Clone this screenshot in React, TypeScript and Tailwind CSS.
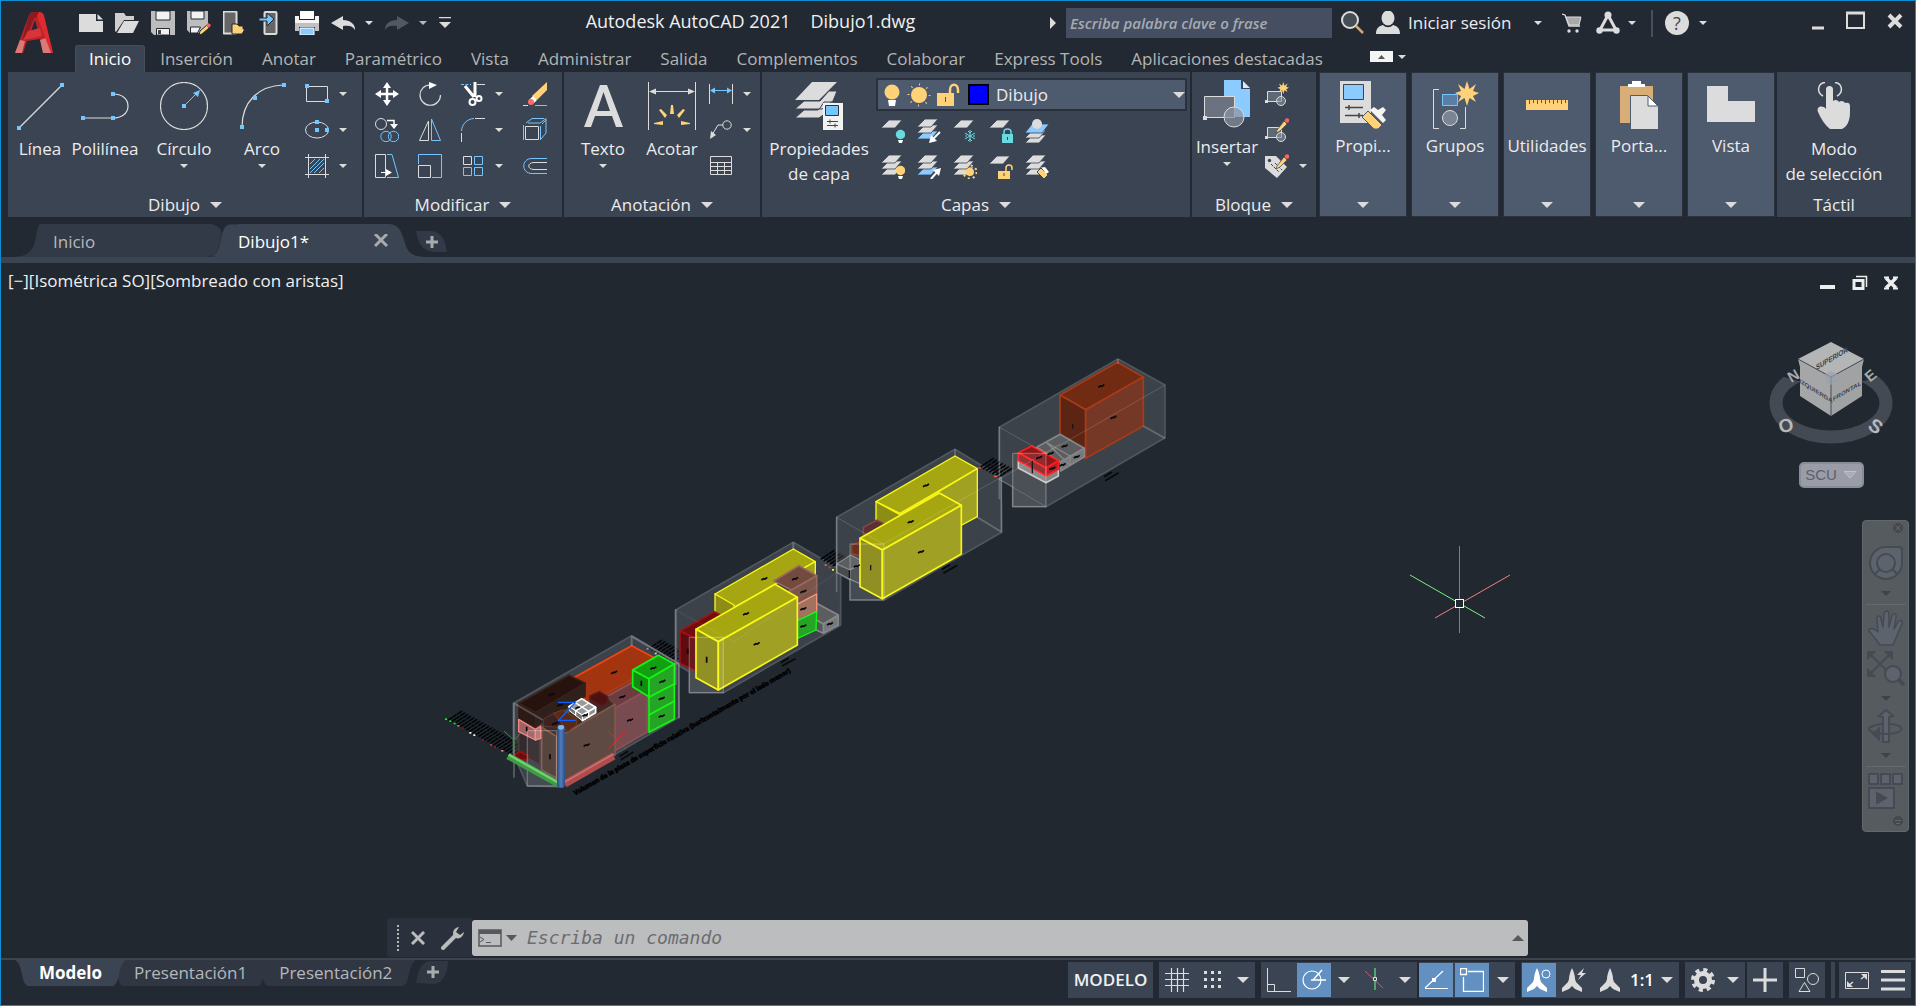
import type { ReactNode } from "react"

// --- Types ---
type Kids = { children?: ReactNode }
type Face = [points: string, fill: string, stroke?: string, width?: number]

// --- Colors used by the icons ---
const W = "#dcdcdc"
const B = "#75c5ff"
const Y = "#ffd27a"
const P = "#3b4453"

// --- Small helpers ---
function Svg({ w = 24, h = 24, children }: Kids & { w?: number; h?: number }) {
  return (
    <svg width={w} height={h} viewBox={`0 0 ${w} ${h}`} fill="none" stroke={W} className="shrink-0" aria-hidden="true">
      {children}
    </svg>
  )
}

function Caret({ big }: { big?: boolean }) {
  return big ? (
    <Svg w={12} h={6}><path d="M0 0h12L6 6z" fill={W} stroke="none" /></Svg>
  ) : (
    <Svg w={8} h={4}><path d="M0 0h8L4 4z" fill={W} stroke="none" /></Svg>
  )
}

// --- Quick access toolbar icons ---
const quickIcons: { name: string; icon: ReactNode }[] = [
  { name: "Nuevo", icon: <Svg><path d="M0 3h17v7h7v11H0z" fill={W} stroke="none" /><path d="M18.500 3v5.500H24z" fill={W} stroke="none" /></Svg> },
  { name: "Abrir", icon: <Svg><path d="M0 20V2h9l2 3h8v4H9L1 21z" fill="#cfcfcf" stroke="none" /><path d="M9 10h15l-6 12H2z" fill={W} stroke="none" /></Svg> },
  { name: "Guardar", icon: <Svg><path d="M0 0h24v24H3l-3-3z" fill="#bdbdbd" stroke="none" /><path d="M5 0h14v9H5z" fill="#f2f2f2" stroke="#222933" /><path d="M5.500 17.500h13V24h-13z" fill="#f2f2f2" stroke="#222933" /><path d="M7 19h3v4H7z" fill="#444" stroke="none" /></Svg> },
  { name: "Guardar como", icon: <Svg><path d="M0 0h21v13l-9 9H3l-3-3z" fill="#bdbdbd" stroke="none" /><path d="M4 0h13v8H4z" fill="#f2f2f2" stroke="#222933" /><path d="M3.500 16h10l-3 6h-7z" fill="#f2f2f2" stroke="#222933" /><path d="M13 20l7-6 2 3-7 6-3 1z" fill={Y} stroke="#222933" /><path d="M19 14l2-2 3 2-2 3z" fill="#ff6060" stroke="none" /></Svg> },
  { name: "Abrir desde móvil", icon: <Svg><rect x="0.500" y="0.500" width="13" height="22" rx="1" fill="#666" stroke={W} strokeWidth="2" /><path d="M9 13h5l2 2h4v3h2l-3 5H9z" fill={Y} stroke="#222933" /></Svg> },
  { name: "Guardar en móvil", icon: <Svg><rect x="5.500" y="1" width="12" height="22" rx="1" fill="#666" stroke={W} strokeWidth="2" /><path d="M0 7h8V2l7 6-7 7v-5H0z" fill={B} stroke="#222933" /></Svg> },
  { name: "Trazar", icon: <Svg><path d="M5 0h14v8H5z" fill="#fff" stroke="none" /><path d="M0 5h4v4h16V5h4v7H0z" fill="#f4f4f4" stroke="none" /><path d="M0 12h24v8h-4v-4H4v4H0z" fill="#c0c0c0" stroke="none" /><path d="M5 17h14v7H5z" fill="#8ccbff" stroke="#fff" /></Svg> },
]

const Arrow = ({ dim, flip }: { dim?: boolean; flip?: boolean }) => (
  <Svg>
    <path d="M0 12L12 5v4c7 0 12 4 12 9v1c-2-4-6-5-12-4v4z" transform={flip ? "translate(24 0) scale(-1 1)" : undefined} fill={dim ? "#5f646b" : W} stroke="none" />
  </Svg>
)

// --- Big ribbon icons ---
const dot = (x: number, y: number) => <rect x={x - 2} y={y - 2} width="4" height="4" fill={B} stroke="none" />

const LineIcon = <Svg w={48} h={48}><path d="M3 46L46 3" strokeWidth="1.200" />{dot(3, 46)}{dot(46, 3)}</Svg>
const PolyIcon = <Svg w={48} h={48}><path d="M1 36h31M32 36c8 0 15-4 15-12s-7-12-15-12" strokeWidth="1.200" />{dot(2, 36)}{dot(32, 36)}{dot(32, 12)}</Svg>
const CircleIcon = <Svg w={48} h={48}><circle cx="24" cy="24" r="23.500" strokeWidth="1.200" /><path d="M26 22l10-10" stroke={B} /><path d="M40 8l-2 7-5-4z" fill={B} stroke="none" />{dot(24, 24)}</Svg>
const ArcIcon = <Svg w={48} h={48}><path d="M4 45C4 20 20 4 45 3" strokeWidth="1.200" />{dot(4, 45)}{dot(17, 16)}{dot(46, 3)}</Svg>
const TextIcon = <Svg w={48} h={48}><path d="M5 45L21 3h7l16 42h-7l-4-11H16l-4 11zM18 29h13L24.500 10z" fill={W} stroke="none" /></Svg>
const DimIcon = (
  <Svg w={48} h={48}>
    <path d="M.5 0v48M47.500 0v48M2 9.500h44" />
    <path d="M1 9.500l7-3v6zM47 9.500l-7-3v6z" fill={W} stroke="none" />
    <path d="M22 32l1-9h2l1 9zM17 36l-6-8 2-1 6 6zM31 36l6-8-2-1-6 6zM15 43l-9-1v-1l9-2zM33 43l9-1v-1l-9-2z" fill={Y} stroke="none" />
  </Svg>
)
const LayerPropIcon = (
  <Svg w={48} h={48}>
    <path d="M17 0h25L24 18H0z" fill={W} stroke="none" />
    <path d="M9 19h16l9-10h8l-4 10-11 8H0zM9 28h14l2-2 4-6h9v6L24 36H0z" fill={W} stroke={P} strokeWidth="1" />
    <path d="M28 21h20v27H28z" fill="#f2f2f2" stroke="none" />
    <path d="M30.500 23.500h13v10h-13z" fill={B} stroke="#333" />
    <path d="M32 39.500h11M32 43.500h11M35 37.500v4M40 41.500v4" stroke="#444" />
  </Svg>
)
const InsertIcon = (
  <Svg w={48} h={48}>
    <path d="M21 0h17v9h9v28H21z" fill="#8ccbff" stroke="none" /><path d="M40 1v7h7z" fill="#d5ecff" stroke="none" />
    <path d="M1.500 16.500h30v21h-30z" fill="#6b7381" /><circle cx="31" cy="37" r="10" fill="#8a92a0" fillOpacity=".7" />
    <path d="M0 36h4v4H0z" fill={W} stroke="none" />
  </Svg>
)
const PropsIcon = (
  <Svg w={48} h={48}>
    <path d="M1 0h31v42H1z" fill={W} stroke="none" /><path d="M4.500 3.500h20v15h-20z" fill="#8ccbff" stroke="#444" />
    <path d="M6 26.500h18M6 34.500h18M10 24v5M20 32v5" stroke="#444" strokeWidth="1.500" />
    <path d="M23 36l6-6 14 14-4 4h-4z" fill={Y} stroke="#4e5a6d" /><path d="M31 29l4-3 4 3 5-3 3 3-4 5 4 5-3 3z" fill="#f4f4f4" stroke="none" />
  </Svg>
)
const starPoints = "36,0 38.500,8 45,3 42,10 48,12 42,15 45,21 38.500,17 36,25 33.500,17 27,21 30,15 24,12 30,10 27,3 33.500,8"
const GroupsIcon = (
  <Svg w={48} h={48}>
    <path d="M8 8.500H2.500v39H8M29 47.500h5.500V26" /><path d="M11.500 13.500h15v11h-15z" fill="#5a7ea6" stroke={B} />
    <circle cx="19" cy="37" r="7.500" fill="#7b8492" /><polygon points={starPoints} fill={Y} stroke="none" />
  </Svg>
)
const RulerIcon = (
  <Svg w={48} h={48}>
    <path d="M3 19h42v10H3z" fill={Y} stroke="none" />
    <path d="M6.500 19v4M10.500 19v3M14.500 19v4M18.500 19v3M22.500 19v4M26.500 19v3M30.500 19v4M34.500 19v3M38.500 19v4M42.500 19v3" stroke="#4e5a6d" />
  </Svg>
)
const ClipIcon = (
  <Svg w={48} h={48}>
    <path d="M5 5h33v37H5z" fill="#d8ad76" stroke="none" /><path d="M13 6V3h4V0h9v3h4v3z" fill="#fff" stroke="none" />
    <path d="M15.500 14.500h17l11 11v23h-28z" fill={W} stroke="#4e5a6d" /><path d="M33 15v10h10z" fill="#fff" stroke="#4e5a6d" />
  </Svg>
)
const ViewIcon = <Svg w={48} h={48}><path d="M0 5h21v15h27v21H0z" fill={W} stroke="none" /></Svg>
const TouchIcon = (
  <Svg w={48} h={48}>
    <path d="M13 14C6 10 8 1 15 .5M27 14c7-4 5-13-2-13.500" strokeWidth="1.500" />
    <path d="M16 27V7c0-4 7-4 7 0v12c2-2 5-1 6 1 2-2 5-1 6 1 3-1 5 0 5 3v6c0 9-3 15-8 17H20C15 43 11 37 8 30c-2-6 5-7 8-3z" fill={W} stroke="none" />
  </Svg>
)

// --- Small ribbon icons ---
const RectIcon = <Svg><path d="M1.500 4.500h21v15h-21z" />{dot(2, 4)}{dot(22, 19)}</Svg>
const EllipseIcon = <Svg><ellipse cx="12" cy="12" rx="11.500" ry="8" />{dot(12, 12)}{dot(12, 4)}{dot(22, 12)}</Svg>
const HatchIcon = <Svg><path d="M3.500 0v24M20.500 0v24M0 3.500h24M0 20.500h24" /><path d="M5 10l5-5M5 15L15 5M5 19L19 5M9 19l10-10M14 19l5-5" stroke={B} /></Svg>
const MoveIcon = <Svg><path d="M12 3v18M3 12h18" strokeWidth="2.500" stroke="#fff" /><path d="M12 0l4 6H8zM12 24l4-6H8zM0 12l6-4v8zM24 12l-6-4v8z" fill="#fff" stroke="none" /></Svg>
const RotateIcon = <Svg><path d="M12 3C6 3 2 8 2 13a10.200 10.200 0 0 0 20.500 0" strokeWidth="1.200" /><path d="M11 0l8 3-8 4z" fill="#fff" stroke="none" /></Svg>
const TrimIcon = (
  <Svg>
    <path d="M0 2.500h10" stroke={B} strokeDasharray="3 1.500" /><path d="M16 2.500h8" />
    <path d="M4 4l9 11M14 0v15" stroke="#fff" strokeWidth="3" /><circle cx="11.500" cy="20" r="3" strokeWidth="2" stroke="#fff" /><circle cx="18" cy="16.500" r="2.500" strokeWidth="2" stroke="#fff" />
  </Svg>
)
const EraseIcon = <Svg><path d="M0 23.500h5" /><path d="M12 23.500h12" stroke={B} /><path d="M24 0v8L14 18l-5-4z" fill={Y} stroke="none" /><path d="M10 14l4 4-3 3-5-3z" fill="#fff" stroke="none" /><circle cx="8" cy="20" r="3" fill="#ff6b6b" stroke="none" /></Svg>
const CopyIcon = <Svg><circle cx="6" cy="6" r="5.500" /><path d="M12 2.500h7v4" stroke="#fff" strokeWidth="1.500" /><path d="M15 6h8l-4 5z" fill="#fff" stroke="none" /><circle cx="11" cy="18.500" r="5.200" stroke={B} /><circle cx="18.500" cy="18.500" r="5.200" stroke={B} /></Svg>
const MirrorIcon = <Svg><path d="M10.500 3v19.500h-9z" /><path d="M13.500 1v21.500h9z" stroke={B} /></Svg>
const FilletIcon = <Svg><path d="M14 .5h10M.5 15v9" /><path d="M.5 13C1 6 6 1 13 .5" stroke={B} /></Svg>
const ExplodeIcon = <Svg><path d="M.5 7v15M3 5l6-4.500h12M5 5h12l6-4.500V15l-5 6M19 6l4-4" stroke={B} /><path d="M2.500 8.500h13v13h-13z" /><path d="M17.500 8v14" stroke={B} /></Svg>
const StretchIcon = <Svg><path d="M.5.5h10v23H.5z" /><path d="M12 .5h5l6.500 23H12" stroke={B} /><path d="M6 18.500h6" stroke="#fff" /><path d="M11 15l6 3.500-6 3.500z" fill="#fff" stroke="none" /></Svg>
const ScaleIcon = <Svg><path d="M.5 10V.5h23v23H14" stroke={B} /><path d="M.5 11.500h12v12H.5z" /></Svg>
const ArrayIcon = <Svg><path d="M2.500 2.500h8v8h-8z" /><path d="M13.500 2.500h8v8h-8zM2.500 13.500h8v8h-8zM13.500 13.500h8v8h-8z" stroke={B} /></Svg>
const OffsetIcon = <Svg><path d="M24 4.500H9C-2 4.500-2 19.500 9 19.500h15" stroke={B} /><path d="M24 8.500H11c-7 0-7 7 0 7h13" /></Svg>
const LinearIcon = <Svg><path d="M.5 2v20M23.500 2v20" /><path d="M3 8.500h18" stroke={B} /><path d="M1 8.500l5-3v6zM23 8.500l-5-3v6z" fill={B} stroke="none" /></Svg>
const LeaderIcon = <Svg><circle cx="18" cy="7" r="4.200" /><path d="M14 7H9L3 17" /><path d="M1 21l1-8 5 4z" fill={W} stroke="none" /></Svg>
const TableIcon = <Svg><path d="M1.500 2.500h21v18h-21zM1 8.500h22M1 12.500h22M1 16.500h22M8.500 8v13M15.500 8v13" /></Svg>

const sheet = (y: number, fill = W) => <path d={`M8 ${y}h13l-7 8H0z`} fill={fill} stroke={P} strokeWidth=".8" />
const Sheets = ({ mark, low = W }: { mark: ReactNode; low?: string }) => <Svg>{sheet(12, low)}{sheet(6)}{sheet(0)}{mark}</Svg>
const bulb = (c: string) => <><circle cx="19.500" cy="15.500" r="4.700" fill={c} stroke="none" /><path d="M17 21h5l-1 3h-3z" fill="#fff" stroke="none" /></>
const lock = (c: string, open?: boolean) => <><path d={open ? "M9 16h12v8H9z" : "M13 15h11v9H13z"} fill={c} stroke="none" /><path d={open ? "M17 16v-3c0-4 6-4 6 0v2" : "M15 15v-2c0-4 7-4 7 0v2"} stroke={c} strokeWidth="1.500" /><path d={open ? "M15 18v3" : "M18.500 18v3"} stroke={P} /></>
const layerIcons: ReactNode[] = [
  <Svg>{sheet(1)}{bulb("#6bdae0")}</Svg>,
  <Sheets low="#8ccbff" mark={<><path d="M23 13l-7 7" stroke="#fff" strokeWidth="2" /><path d="M12 24l2-8 6 6z" fill="#fff" stroke="none" /></>} />,
  <Svg>{sheet(1)}<path d="M17 11v12M12 14l10 6M22 14l-10 6M15 12l2 2 2-2M15 22l2-2 2 2M12 17h2M20 17h2" stroke="#6bdae0" /></Svg>,
  <Svg>{sheet(1)}{lock("#6bdae0")}</Svg>,
  <Svg>{sheet(16)}{sheet(11)}<path d="M7 5h17l-7 9H0z" fill="#8ccbff" stroke={P} strokeWidth=".8" /><circle cx="12" cy="5" r="5" fill={W} stroke="none" /></Svg>,
  <Sheets mark={bulb(Y)} />,
  <Sheets low="#8ccbff" mark={<><path d="M14 24l6-7" stroke="#fff" strokeWidth="2" /><path d="M24 13l-2 8-6-6z" fill="#fff" stroke="none" /></>} />,
  <Sheets mark={<><circle cx="17" cy="17" r="4" fill={Y} stroke="none" /><circle cx="17" cy="17" r="6.500" stroke={Y} strokeWidth="2" strokeDasharray="2 3.100" /></>} />,
  <Svg>{sheet(1)}{lock(Y, true)}</Svg>,
  <Sheets mark={<><path d="M12 17l4-4 7 7-4 4z" fill={Y} stroke={P} /><path d="M17 13l3-1 4 5-3 2z" fill="#fff" stroke="none" /></>} />,
]

const block = <><path d="M2.500 9.500h14v10h-14z" fill="#5f6875" /><circle cx="16" cy="19" r="4.500" fill="#8a92a0" fillOpacity=".6" /><path d="M0 18h3v3H0z" fill={W} stroke="none" /></>
const pencil = <><path d="M12 12l7-9 3 3-7 7-4 2z" fill={Y} stroke={P} strokeWidth=".7" /><circle cx="22" cy="2.500" r="2.300" fill="#ff6060" stroke="none" /></>
const BlockNewIcon = <Svg>{block}<polygon points={starPoints} transform="translate(1 0) scale(.48)" fill={Y} stroke="none" /></Svg>
const BlockEditIcon = <Svg>{block}{pencil}</Svg>
const TagIcon = <Svg><path d="M0 2h11l11 11-10 11L0 14z" fill={W} stroke="none" /><circle cx="4.500" cy="6.500" r="1.700" fill={P} stroke="none" /><path d="M6 10l8 8M10 9l7 7" stroke={P} strokeDasharray="3 1" />{pencil}</Svg>

// --- Ribbon parts ---
function BigButton({ icon, label, caret, className }: { icon: ReactNode; label: string; caret?: boolean; className: string }) {
  return (
    <button type="button" className={`flex shrink-0 flex-col items-center ${className}`}>
      {icon}
      <span className="mt-[6px] block text-[17px] leading-[25px] whitespace-pre-line text-[#ececec]">{label}</span>
      {caret && <span className="mt-[3px]"><Caret /></span>}
    </button>
  )
}

function SmallButton({ icon, label, caret }: { icon: ReactNode; label: string; caret?: boolean }) {
  return (
    <button type="button" aria-label={label} className="flex h-6 items-center gap-[10px]">
      {icon}
      {caret && <Caret />}
    </button>
  )
}

function Panel({ title, className, noCaret, children }: Kids & { title: string; className: string; noCaret?: boolean }) {
  return (
    <section className={`flex h-[145px] flex-col bg-[#3b4453] ${className}`}>
      <div className="flex h-[121px] pt-[10px]">{children}</div>
      <button type="button" className="flex h-6 items-center justify-center gap-[10px] text-[17px] leading-6 text-[#ececec]">
        {title}
        {!noCaret && <Caret big />}
      </button>
    </section>
  )
}

const menuTabs = ["Inicio", "Inserción", "Anotar", "Paramétrico", "Vista", "Administrar", "Salida", "Complementos", "Colaborar", "Express Tools", "Aplicaciones destacadas"]

const foldedPanels = [
  { label: "Propi...", icon: PropsIcon },
  { label: "Grupos", icon: GroupsIcon },
  { label: "Utilidades", icon: RulerIcon },
  { label: "Porta...", icon: ClipIcon },
  { label: "Vista", icon: ViewIcon },
]

function Header() {
  return (
    <header className="flex h-[71px] items-start">
      <button type="button" aria-label="Menú de la aplicación" className="w-[74px] pt-[11px] pl-[14px]">
        <svg width="40" height="42" viewBox="0 0 40 42">
          <path d="M0 41L14 3q1-3 6-3h4q4 0 5 4l9 37h-9l-4-14-13 2-4 12z" fill="#b9242a" />
          <path d="M14 3q1-3 6-3h4l1 5-6 1-6 16-6 7z" fill="#8d1a20" />
          <path d="M20 8l3 11-8 3z" fill="#222933" />
          <path d="M13 19l12-3 2 8-19 4z" fill="#d8343a" />
          <path d="M0 41l5-13 5 1-3 12zM28 41l-3-13 6-2 6 15z" fill="#d97a76" />
          <path d="M24 0q4 0 5 4l9 37h-2L22 4z" fill="#dd2b30" />
        </svg>
      </button>
      <div className="flex min-w-0 flex-1 flex-col">
        <div className="flex h-11 items-center">
          <div className="flex shrink-0 items-center gap-3 pl-1">
            {quickIcons.map((q) => (
              <button key={q.name} type="button" aria-label={q.name}>{q.icon}</button>
            ))}
            <button type="button" aria-label="Deshacer" className="flex items-center gap-[10px]"><Arrow /><Caret /></button>
            <button type="button" aria-label="Rehacer" className="flex items-center gap-[10px] opacity-80"><Arrow dim flip /><Caret /></button>
            <button type="button" aria-label="Personalizar">
              <Svg w={12} h={12}><path d="M0 .5h12" stroke={W} strokeWidth="1.500" /><path d="M0 5h12l-6 6z" fill={W} stroke="none" /></Svg>
            </button>
          </div>
          <h1 className="flex min-w-0 flex-1 justify-center gap-[20px] pb-1 text-[18px] whitespace-nowrap text-[#f0f0f0]">
            <span>Autodesk AutoCAD 2021</span><span>Dibujo1.dwg</span>
          </h1>
          <div className="flex shrink-0 items-center">
            <Svg w={6} h={12}><path d="M0 0l6 6-6 6z" fill={W} stroke="none" /></Svg>
            <input aria-label="Buscar" placeholder="Escriba palabra clave o frase" className="ml-[10px] h-[30px] w-[266px] bg-[#464f61] px-1 text-[15px] font-semibold text-white italic placeholder:text-[#a5aab3]" />
            <button type="button" aria-label="Búsqueda" className="ml-2">
              <Svg><circle cx="10" cy="9" r="8" fill="#474d55" strokeWidth="2" /><path d="M16 15l7 7" stroke="#d8a56e" strokeWidth="2.500" /></Svg>
            </button>
            <button type="button" className="ml-3 flex items-center gap-2 text-[17px] text-[#ececec]">
              <Svg><ellipse cx="12" cy="7" rx="6.500" ry="7.500" fill={W} stroke="none" /><path d="M0 23c0-6 3-8 7-9 3 3 7 3 10 0 4 1 7 3 7 9z" fill={W} stroke="none" /></Svg>
              <span className="w-[118px] text-left">Iniciar sesión</span>
              <Caret />
            </button>
            <button type="button" aria-label="Tienda" className="ml-5">
              <Svg w={20} h={20}><path d="M0 1l3 1 4 11h11" strokeWidth="1.300" /><path d="M4 4h15l-2 8H7z" fill="#a9a9a9" stroke={W} /><circle cx="7" cy="18" r="1.700" fill={W} stroke="none" /><circle cx="15" cy="18" r="1.700" fill={W} stroke="none" /></Svg>
            </button>
            <button type="button" aria-label="Autodesk App Store" className="ml-[14px] flex items-center gap-2">
              <Svg><path d="M12 4L4 19h16z" strokeWidth="3" /><circle cx="12" cy="4" r="3.500" fill={W} stroke="none" /><circle cx="3.500" cy="19.500" r="3.200" fill={W} stroke="none" /><circle cx="20.500" cy="19.500" r="3.200" fill={W} stroke="none" /></Svg>
              <Caret />
            </button>
            <span className="ml-[15px] h-[27px] w-[2px] bg-[#464f61]" />
            <button type="button" aria-label="Ayuda" className="ml-3 flex items-center gap-[10px]">
              <span className="flex size-6 items-center justify-center rounded-full bg-[#dcdcdc] text-[18px] leading-6 text-[#444]">?</span>
              <Caret />
            </button>
          </div>
          <div className="flex h-9 w-[208px] shrink-0 items-center justify-end gap-[22px] pb-1 pr-3">
            <button type="button" aria-label="Minimizar"><Svg w={12} h={20}><path d="M0 17h12" strokeWidth="3" /></Svg></button>
            <button type="button" aria-label="Maximizar"><Svg w={19} h={20}><path d="M1 2v15h17V2z" strokeWidth="2" /><path d="M0 2h19" strokeWidth="3" /></Svg></button>
            <button type="button" aria-label="Cerrar"><Svg w={16} h={20}><path d="M2 4l12 12M14 4L2 16" strokeWidth="4" /></Svg></button>
          </div>
        </div>
        <nav className="flex h-[27px] items-stretch gap-px text-[17px] leading-[26px] whitespace-nowrap text-[#b4b5b3]">
          {menuTabs.map((t, i) => (
            <button
              key={t}
              type="button"
              className={i === 0 ? "rounded-t-[3px] border border-b-0 border-[#454e5d] bg-[#3b4453] px-[13px] text-white" : "px-[14px]"}
            >
              {t}
            </button>
          ))}
          <button type="button" aria-label="Minimizar la cinta" className="ml-8 flex items-center gap-[5px] pb-1">
            <Svg w={23} h={11}><path d="M0 0h23v11H0z" fill="#f4f4f4" stroke="none" /><path d="M8 8h7l-3.500-4z" fill="#555" stroke="none" /></Svg>
            <Caret />
          </button>
        </nav>
      </div>
    </header>
  )
}

function Ribbon() {
  return (
    <div className="flex gap-[2px] pr-1 pl-[7px]">
      <Panel title="Dibujo" className="w-[354px]">
        <BigButton icon={LineIcon} label="Línea" className="w-[64px]" />
        <BigButton icon={PolyIcon} label="Polilínea" className="w-[66px]" />
        <BigButton icon={CircleIcon} label="Círculo" caret className="w-[92px]" />
        <BigButton icon={ArcIcon} label="Arco" caret className="w-[64px]" />
        <div className="ml-[11px] flex flex-col gap-3">
          <SmallButton icon={RectIcon} label="Rectángulo" caret />
          <SmallButton icon={EllipseIcon} label="Elipse" caret />
          <SmallButton icon={HatchIcon} label="Sombreado" caret />
        </div>
      </Panel>
      <Panel title="Modificar" className="w-[198px]">
        <div className="grid h-24 grid-cols-[43px_43px_62px_24px] gap-y-3 pl-[11px]">
          <SmallButton icon={MoveIcon} label="Desplazar" />
          <SmallButton icon={RotateIcon} label="Girar" />
          <SmallButton icon={TrimIcon} label="Recortar" caret />
          <SmallButton icon={EraseIcon} label="Borrar" />
          <SmallButton icon={CopyIcon} label="Copiar" />
          <SmallButton icon={MirrorIcon} label="Simetría" />
          <SmallButton icon={FilletIcon} label="Empalme" caret />
          <SmallButton icon={ExplodeIcon} label="Descomponer" />
          <SmallButton icon={StretchIcon} label="Estirar" />
          <SmallButton icon={ScaleIcon} label="Escala" />
          <SmallButton icon={ArrayIcon} label="Matriz" caret />
          <SmallButton icon={OffsetIcon} label="Desfase" />
        </div>
      </Panel>
      <Panel title="Anotación" className="w-[196px]">
        <BigButton icon={TextIcon} label="Texto" caret className="w-[78px]" />
        <BigButton icon={DimIcon} label="Acotar" className="w-[60px]" />
        <div className="ml-[7px] flex flex-col gap-3">
          <SmallButton icon={LinearIcon} label="Lineal" caret />
          <SmallButton icon={LeaderIcon} label="Directriz" caret />
          <SmallButton icon={TableIcon} label="Tabla" />
        </div>
      </Panel>
      <Panel title="Capas" className="w-[428px]">
        <BigButton icon={LayerPropIcon} label={"Propiedades\nde capa"} className="w-[114px]" />
        <div className="-mt-1 flex flex-col">
          <div className="flex h-[33px] w-[311px] items-center border-2 border-[#2a313d] bg-[#4e5a6d] pl-[6px]">
            <Svg w={16} h={24}><circle cx="8" cy="9" r="7.500" fill={Y} stroke="none" /><path d="M4 17h8l-1 6H5z" fill="#fff" stroke="none" /></Svg>
            <span className="ml-[7px]"><Svg><circle cx="12" cy="12" r="8" fill={Y} stroke="none" /><circle cx="12" cy="12" r="10.500" stroke={Y} strokeWidth="2" strokeDasharray="1 7.200" /></Svg></span>
            <span className="ml-[6px]"><Svg><path d="M0 10h17v13H0z" fill={Y} stroke="none" /><path d="M13 10V7c0-7 8-7 8 0v3" stroke={Y} strokeWidth="2.500" /><path d="M8.500 14v5" stroke="#555" /></Svg></span>
            <span className="ml-[7px] size-[21px] border-2 border-black bg-[#0000ff]" />
            <select aria-label="Capa actual" className="ml-[7px] min-w-0 flex-1 appearance-none bg-transparent text-[17px] leading-[26px] text-[#ececec]">
              <option>Dibujo</option>
            </select>
            <Caret big />
          </div>
          <div className="mt-[8px] ml-[5px] grid grid-cols-[36px_36px_36px_36px_36px] gap-y-3">
            {layerIcons.map((icon, i) => (
              <button key={i} type="button" aria-label={`Herramienta de capa ${i + 1}`} className="h-6">{icon}</button>
            ))}
          </div>
        </div>
      </Panel>
      <Panel title="Bloque" className="w-[124px]">
        <BigButton icon={InsertIcon} label="Insertar" caret className="-mt-[2px] w-[70px]" />
        <div className="ml-[3px] flex flex-col gap-3">
          <SmallButton icon={BlockNewIcon} label="Crear bloque" />
          <SmallButton icon={BlockEditIcon} label="Editar bloque" />
          <SmallButton icon={TagIcon} label="Editar atributos" caret />
        </div>
      </Panel>
      <div className="ml-px flex gap-1">
        {foldedPanels.map((p) => (
          <button key={p.label} type="button" className="flex h-[145px] w-[88px] flex-col items-center border border-[#2b323e] bg-[#4e5a6d] pt-2 text-[17px] leading-[25px] text-[#ececec]">
            {p.icon}
            <span className="mt-1 flex-1">{p.label}</span>
            <span className="pb-2"><Caret big /></span>
          </button>
        ))}
      </div>
      <Panel title="Táctil" noCaret className="flex-1 pr-[20px]">
        <BigButton icon={TouchIcon} label={"Modo\nde selección"} className="flex-1" />
      </Panel>
    </div>
  )
}

function FileTabs() {
  return (
    <div className="border-b-[6px] border-[#3b4453]">
      <div className="flex h-10 items-end pl-[14px] whitespace-nowrap">
        <svg width="26" height="33" viewBox="0 0 26 33"><path d="M0 33c14-1 19-8 21-20C23 4 23 0 26 0v33z" fill="#323947" /></svg>
        <button type="button" className="flex h-[33px] w-[181px] items-center rounded-tr-[12px] bg-[#323947] pt-[3px] pl-3 text-[17px] leading-6 text-[#b8b9ba]">Inicio</button>
        <svg width="30" height="33" viewBox="0 0 30 33" className="-ml-[14px]"><path d="M0 33c9-2 11-8 13-20C15 4 18 0 24 0h6v33z" fill="#3b4453" stroke="#2a313c" /><path d="M24 1h6v32H8z" fill="#3b4453" /></svg>
        <button type="button" className="flex h-[33px] w-[150px] items-center justify-between bg-[#3b4453] pt-[3px] text-[17px] leading-6 text-white">
          Dibujo1*
          <Svg w={14} h={16}><path d="M1 0l12 12M13 0L1 12" stroke="#a9abad" strokeWidth="3" /></Svg>
        </button>
        <svg width="36" height="33" viewBox="0 0 36 33"><path d="M0 0c10 0 13 6 16 16 3 12 7 16 20 17H0z" fill="#3b4453" /></svg>
        <button type="button" aria-label="Nuevo dibujo" className="mb-[5px] -ml-2">
          <Svg w={32} h={21}><path d="M0 0h14c11 0 15 8 17 21H18C6 20 2 12 0 0z" fill="#323947" stroke="none" /><path d="M16 5v12M10 11h12" stroke="#a9abad" strokeWidth="3" /></Svg>
        </button>
      </div>
    </div>
  )
}

// --- 3D model: faces are listed back to front ---
const leftFaces: Face[] = [
  ["250,550 605,347 745,430 747,592 404,790 380,800 292,798 250,700", "rgba(255,255,255,.12)", "#50565e"],
  ["737,270 1090,67 1232,150 1232,315 880,518 778,518 778,455 737,432", "rgba(255,255,255,.12)", "#50565e"],
  ["434,472 605,377 735,446 515,575 466,545", "#a33410", "#f44414"],
  ["515,528 610,475 640,500 520,560", "#8f3b20", "#c9411a", 2],
  ["530,530 610,486 652,510 555,565", "#6c3c41", "#8a5257"],
  ["555,565 652,510 652,636 555,692", "#784b50", "#8a5257"],
  ["608,450 657,476 657,530 608,500", "#128c12", "#14f514"],
  ["608,450 685,406 733,432 657,476", "#12a012", "#14f514"],
  ["657,476 733,432 733,492 657,532", "#26a426", "#14f514"],
  ["657,532 733,492 733,544 657,585", "#26a426", "#14f514"],
  ["657,585 733,544 733,597 657,637", "#26a426", "#14f514"],
  ["266,550 330,585 330,735 266,700", "#332a2e", "#483b3e"],
  ["266,550 417,466 466,490 316,578", "#27130e", "#3a211c"],
  ["316,578 466,490 466,530 330,612 316,620", "#30201c", "#3a211c", 3],
  ["266,550 316,578 316,622 266,600", "#2b1a16", "#3a211c", 3],
  ["335,622 520,520 555,553 380,655", "#3c2a27", "#66483f"],
  ["480,528 508,515 533,530 533,548 515,558 480,540", "#4c1212", "#5e1a1a"],
  ["335,622 380,650 380,775 335,750", "#4d3a35", "#80584c"],
  ["380,655 555,553 555,705 404,790 380,790", "#5e4a42", "#80584c"],
  ["340,598 370,580 412,604 382,622 340,618", "#3d2222", "#5c3730", 3],
  ["370,580 398,570 440,596 440,615 412,636 395,610", "#5a2a18", "#7a3a20", 3],
  ["416,560 455,536 497,562 457,586", "#9a9a9a", "#ffffff"],
  ["457,586 497,562 497,578 457,602", "#8c8c8c", "#ffffff"],
  ["418,560 457,586 457,602 418,572", "#777777", "#ffffff", 3],
  ["266,598 316,628 316,660 266,635", "#a06265", "#f08585", 4],
  ["316,628 332,618 332,655 316,660", "#b07472", "#f08585", 4],
  ["252,705 272,695 295,708 290,720 262,718", "#6d0c0c", "#991111"],
  ["855,222 1090,87 1156,125 912,262", "#a6a612", "#f8f816", 4],
  ["855,222 912,255 912,300 855,290", "#8d8d15", "#f8f816", 4],
  ["1120,145 1156,125 1156,180 1110,200", "#a0a020", "#f8f816", 4],
  ["750,333 853,275 900,300 797,356", "#700d10", "#9c1418"],
  ["750,333 797,356 797,453 750,430", "#5e0c10", "#9c1418"],
  ["1160,250 1225,285 1180,312 1130,282", "#5b5d5f", "#85878a"],
  ["1180,312 1225,287 1225,315 1180,340", "#76787a", "#85878a"],
  ["1140,290 1180,312 1180,340 1140,322", "#55585b", "#85878a"],
  ["1032,183 1107,137 1160,167 1085,210", "#724a40", "#99685c"],
  ["1060,222 1085,210 1160,167 1160,222 1103,252", "#7b5549", "#99685c"],
  ["1100,254 1160,222 1160,275 1103,303", "#a0725f", "#f5967c", 4],
  ["1100,303 1160,275 1158,330 1103,355", "#26a426", "#14f514", 4],
  ["798,328 1035,193 1102,232 865,365", "#a6a610", "#f8f816"],
  ["798,328 865,365 865,510 798,473", "#8a8a18", "#f8f816"],
  ["865,365 1102,232 1102,375 865,510", "#a0a025", "#f8f816"],
  ["778,352 880,352 880,518 778,518", "rgba(255,255,255,.06)", "rgba(255,255,255,.25)", 4],
  ["292,632 380,632 380,798 292,798", "rgba(255,255,255,.05)", "rgba(255,255,255,.25)", 4],
]

const rightFaces: Face[] = [
  ["110,532 465,328 603,412 605,577 252,780 150,780 150,720 110,697", "rgba(255,255,255,.12)", "#50565e"],
  ["598,262 954,57 1095,135 1095,293 738,500 638,500 638,440 598,418", "rgba(255,255,255,.12)", "#50565e"],
  ["228,485 465,348 532,386 300,520", "#a6a612", "#f8f816", 4],
  ["228,485 300,524 300,570 228,545", "#8d8d15", "#f8f816", 4],
  ["300,524 532,386 532,530 480,558 300,600", "#a0a022", "#f8f816", 4],
  ["190,562 230,541 262,556 225,580 190,585", "#5c3134", "#7c484b"],
  ["155,615 180,605 200,620 200,655 155,640", "#5e2617", "#90371f"],
  ["110,672 152,645 190,665 150,690", "#5b5d5f", "#85878a", 4],
  ["110,672 150,690 190,668 190,735 150,718 110,697", "#484b4f", "#85878a", 4],
  ["180,595 418,459 484,496 247,630", "#a6a610", "#f8f816"],
  ["180,595 247,630 247,776 180,740", "#8a8a18", "#f8f816"],
  ["247,630 484,496 484,642 247,776", "#a0a025", "#f8f816"],
  ["150,612 252,612 252,780 150,780", "rgba(255,255,255,.05)", "rgba(255,255,255,.22)", 4],
  ["780,165 952,67 1030,111 857,209", "#702b12", "#a83b17"],
  ["780,165 857,209 857,355 780,312", "#5c2413", "#a83b17"],
  ["857,209 1030,111 1030,258 857,355", "#753726", "#a83b17"],
  ["710,322 780,283 853,325 782,366", "#5b5d5f", "#85878a"],
  ["782,366 853,325 853,350 782,393", "#76787a", "#85878a"],
  ["740,308 810,348 810,376", "none", "#85878a", 4],
  ["655,362 738,408 775,385 775,408 738,428 655,384", "#808284", "#c8c8c8"],
  ["655,338 695,318 775,362 738,384", "#8d1719", "#ff1c1c"],
  ["655,338 738,384 738,408 655,362", "#8b2226", "#ff1c1c"],
  ["738,384 775,362 775,388 738,408", "#b02226", "#ff1c1c"],
  ["638,340 738,340 738,500 638,500", "rgba(255,255,255,.08)", "rgba(255,255,255,.25)", 4],
]

// short black labels written on the faces
const leftMarks = [[365, 523], [552, 457], [670, 444], [697, 484], [695, 535], [695, 588], [600, 600], [577, 530], [470, 675], [390, 555], [375, 610], [1003, 176], [948, 281], [980, 371], [1095, 176], [1120, 214], [1120, 266], [1120, 318], [1200, 311], [445, 562], [466, 585]]
const rightMarks = [[378, 436], [332, 545], [363, 635], [904, 138], [940, 232], [794, 318], [830, 350], [717, 352], [757, 385], [752, 340], [170, 678], [788, 374]]

const Faces = ({ items }: { items: Face[] }) => (
  <>
    {items.map(([points, fill, stroke, width], i) => (
      <polygon key={i} points={points} fill={fill} stroke={stroke} strokeWidth={width ?? 5} strokeLinejoin="round" />
    ))}
  </>
)

const Marks = ({ items }: { items: number[][] }) => (
  <path d={items.map(([x, y]) => `M${x - 9} ${y + 4}l7-4 4 1 7-5`).join("")} stroke="#080808" strokeWidth="5" fill="none" />
)

// rows of tiny slanted labels next to each container
const Ticks = ({ x, y, n, len = 42 }: { x: number; y: number; n: number; len?: number }) => (
  <path
    d={Array.from({ length: n }, (_, i) => `M${x + i * 9} ${y + i * 5}l${len} ${-len * 0.65}`).join("")}
    stroke="#020304"
    strokeWidth="5"
    strokeDasharray="16 1 12 2"
    fill="none"
  />
)

function Model() {
  return (
    <svg width="760" height="460" viewBox="430 350 760 460" className="absolute top-[87px] left-[429px]" aria-label="Modelo 3D">
      <defs>
        <linearGradient id="axisZ"><stop offset="0" stopColor="#2b4a7c" /><stop offset=".5" stopColor="#4f7dc0" /><stop offset="1" stopColor="#2c4d80" /></linearGradient>
      </defs>
      <g transform="translate(430 520) scale(.33333)">
        <Ticks x={55} y={600} n={22} />
        <Ticks x={655} y={387} n={9} />
        <Faces items={leftFaces} />
        <path d="M252 548v225M737 268v227M605 347v30M1090 67v22M747 430v165M253 550l85 50M606 350l140 82" stroke="rgba(255,255,255,.22)" strokeWidth="6" />
        <path d="M737 270L912 365 1232 150" stroke="rgba(255,255,255,.12)" strokeWidth="2" fill="none" />
        <Marks items={leftMarks} />
        <path d="M830 410v18M773 386v16M634 482v16M360 702v16M290 620v14" stroke="#080808" strokeWidth="5" />
        <path d="M436 548l40 26v20M477 549l-40 24v12" stroke="#fff" strokeWidth="4" fill="none" />
        <path d="M404 792L551 708" stroke="#b04c4c" strokeWidth="22" /><path d="M404 786L551 702" stroke="#c97070" strokeWidth="5" />
        <path d="M234 708L388 794" stroke="#3f9c43" strokeWidth="20" /><path d="M236 704L388 790" stroke="#74d077" strokeWidth="7" />
        <rect x="381" y="615" width="24" height="188" rx="8" fill="url(#axisZ)" /><ellipse cx="393" cy="622" rx="9" ry="7" fill="#7cb8f0" />
        <path d="M384 547h52l-50 54h52" stroke="#0a63ff" strokeWidth="4" fill="none" />
        <path d="M535 633l53 55M588 633l-53 55" stroke="#ee2222" strokeWidth="3" />
        <path d="M222 633l30 28 20-22M252 661v26" stroke="#1f9a24" strokeWidth="3" fill="none" />
        {[["#0f0", 45, 595], ["#0f0", 58, 601], ["#0f0", 71, 608], ["#c77", 82, 615], ["#722", 95, 622], ["#fff", 118, 636], ["#fff", 130, 643], ["#722", 155, 658], ["#a44", 180, 672], ["#c00", 192, 679], ["#f88", 214, 690], ["#fbb", 674, 398], ["#999", 650, 384], ["#c75", 1184, 133], ["#c42", 1196, 140], ["#ff0", 1206, 147]].map(([c, x, y], i) => (
          <rect key={i} x={x} y={y} width="6" height="5" fill={c as string} />
        ))}
        <Ticks x={1172} y={118} n={5} />
        <path d="M568 710l26-16M572 720l38-24M1052 428l24-14M1056 438l40-22" stroke="#07090b" strokeWidth="5" />
        <text x="436" y="826" transform="rotate(-29.800 436 826)" fontSize="19" fontWeight="700" fill="#020203" stroke="#020203" strokeWidth="2">Volumen de la pieza de superficie relativa (horizontalmente por el lado menor)</text>
      </g>
      <g transform="translate(800 340) scale(.33333)">
        <Faces items={rightFaces} />
        <Ticks x={540} y={382} n={7} />
        <path d="M110 530v227M598 260v218M465 328v22M954 57v14M604 412v165M532 532l74 45M1030 258l65 37" stroke="rgba(255,255,255,.22)" strokeWidth="5" />
        <path d="M598 262L738 340 1095 135M110 532l140 80 353-200M598 418l140 82M598 418L780 312" stroke="rgba(255,255,255,.16)" strokeWidth="3" fill="none" />
        <path d="M697 362v38M212 675v16M818 252v14M148 690v24" stroke="#15181b" strokeWidth="4" />
        <Marks items={rightMarks} />
        <path d="M426 688l24-14M430 700l42-24M912 410l24-14M916 422l40-24" stroke="#07090b" strokeWidth="5" />
        <path d="M535 383h8" stroke="#f33" strokeWidth="5" /><path d="M582 409h10" stroke="#e63" strokeWidth="5" />
      </g>
    </svg>
  )
}

function ViewCube() {
  return (
    <div className="absolute top-[76px] right-[22px] flex w-[124px] flex-col items-center">
      <svg width="124" height="106" viewBox="0 0 124 106" fontFamily="Liberation Sans" fontWeight="700" textAnchor="middle">
        <ellipse cx="62" cy="64" rx="55" ry="34" fill="none" stroke="#444a53" strokeWidth="13" />
        <path d="M29 20L62 2l33 18v-6h12v24l-12 4H29l-14-4V20z" fill="#212830" />
        <text x="24" y="42" fontSize="15" fill="#a8a9ab" transform="rotate(-30 24 36)">N</text>
        <text x="101" y="42" fontSize="15" fill="#a8a9ab" transform="rotate(-40 101 36)">E</text>
        <text x="17" y="93" fontSize="19" fill="#b7b8ba" transform="rotate(-15 17 87)">O</text>
        <text x="107" y="94" fontSize="19" fill="#b7b8ba" transform="rotate(35 107 87)">S</text>
        <path d="M29 20L62 38v39L31 57V28z" fill="#a5a6a8" />
        <path d="M95 20L62 38v39l31-20V28z" fill="#a1a2a4" />
        <path d="M62 3L95 20 62 38 29 20z" fill="#b4b5b7" />
        <path d="M29 20l33 18 33-18M62 38v39" fill="none" stroke="#4a4d52" />
        <path d="M56 35l6-3 6 3v7l-6 4-6-4z" fill="#9aa2ac" opacity=".7" />
        <text transform="translate(63 22) rotate(-30) skewX(-25)" fontSize="7" fill="#3c424c">SUPERIOR</text>
        <text transform="translate(47 54) skewY(32)" fontSize="6" fill="#3c424c">IZQUIERDA</text>
        <text transform="translate(78 54) skewY(-30)" fontSize="6" fill="#3c424c">FRONTAL</text>
      </svg>
      <button type="button" className="mt-[17px] flex h-[26px] w-[65px] items-center justify-center gap-[6px] rounded-[5px] border-2 border-[#8a8c99] bg-[#9a9ca8] font-[Liberation_Sans] text-[15px] text-[#5e6069]">
        SCU
        <Svg w={14} h={8}><path d="M1 .5h12L7 7z" fill="#a9abb6" stroke="#c0c2ca" /></Svg>
      </button>
    </div>
  )
}

const navCaret = <Svg w={10} h={5}><path d="M0 0h10L5 5z" fill="#3e434a" stroke="none" /></Svg>

function NavBar() {
  return (
    <div className="absolute top-[257px] right-[6px] flex h-[312px] w-[47px] flex-col items-center rounded-[4px] border border-[#63686c] bg-[#565b5f]">
      <button type="button" aria-label="Cerrar barra" className="mr-1 self-end pt-px">
        <Svg w={12} h={12}><circle cx="6" cy="6" r="5" fill="#45494e" stroke="none" /><path d="M3.500 3.500l5 5M8.500 3.500l-5 5" stroke="#63686c" /></Svg>
      </button>
      <button type="button" aria-label="Rueda" className="mt-3 flex flex-col items-center gap-[11px]">
        <svg width="34" height="34" viewBox="0 0 34 34" fill="#5d636d" stroke="#454a53" strokeWidth="2"><path d="M17 1h13q3 0 3 3v13a16 16 0 1 1-16-16z" /><circle cx="17" cy="17" r="9" /><path d="M11 23l-5 5M23 23l5 5" /></svg>
        {navCaret}
      </button>
      <span className="mt-2 h-px w-10 bg-[#656a6e]" />
      <button type="button" aria-label="Encuadre" className="mt-[5px]">
        <svg width="36" height="36" viewBox="0 0 36 36" fill="#5d636d" stroke="#454a53" strokeWidth="1.500" strokeLinejoin="round"><path d="M12 35L6 27 1 21c0-3 4-4 9 1L9 9c0-4 4-4 4 0l2 8 1-13c1-4 5-4 5 0v13l3-11c1-3 5-3 4 1l-2 12 4-7c2-3 5-1 4 2l-6 14-3 7z" /></svg>
      </button>
      <button type="button" aria-label="Zoom" className="mt-[5px] flex flex-col items-center gap-[9px]">
        <svg width="38" height="36" viewBox="0 0 38 36" stroke="#454a53" fill="#454a53" strokeWidth="2"><path d="M2 2l22 22M24 2L2 24" /><path d="M1 1h6L1 7zM25 1h-6l6 6zM1 25h6l-6-6z" /><circle cx="26" cy="23" r="8" fill="#5d636d" /><path d="M32 29l5 5" strokeWidth="4" /></svg>
        {navCaret}
      </button>
      <button type="button" aria-label="Órbita" className="mt-2 flex flex-col items-center gap-[10px]">
        <svg width="36" height="34" viewBox="0 0 36 34" fill="none" stroke="#454a53" strokeWidth="2"><path d="M15 8l-4-1 7-6 7 6-4 1v25h-6z" fill="#5d636d" /><path d="M14 15C-8 18 0 25 20 25c18-1 18-9 2-10" /><path d="M5 25l6-5v10z" fill="#454a53" /></svg>
        {navCaret}
      </button>
      <span className="mt-2 h-px w-10 bg-[#656a6e]" />
      <button type="button" aria-label="ShowMotion" className="mt-[6px]">
        <svg width="36" height="36" viewBox="0 0 36 36" fill="#5d636d" stroke="#454a53" strokeWidth="2"><path d="M1 1h9v10H1zM13 1h9v10h-9zM25 1h9v10h-9zM1 15h25v20H1z" /><path d="M9 20v10l9-5z" fill="#454a53" /></svg>
      </button>
      <button type="button" aria-label="Opciones de barra" className="mt-auto mr-1 self-end pb-1">
        <Svg w={12} h={12}><circle cx="6" cy="6" r="5" fill="#45494e" stroke="none" /><path d="M3 5.500h6M4 8.500h4" stroke="#63686c" /></Svg>
      </button>
    </div>
  )
}

function CommandLine() {
  return (
    <div className="absolute right-[387px] bottom-[1px] left-[386px] flex h-[39px] items-center">
      <div className="flex h-full w-[85px] items-center rounded-l-[4px] bg-[#2a303c] pl-[10px]">
        <span className="h-[26px] border-l-2 border-dotted border-[#b4b6b8]" />
        <button type="button" aria-label="Cerrar línea de comando" className="ml-3"><Svg w={14} h={14}><path d="M1 1l12 12M13 1L1 13" stroke="#b9bbbd" strokeWidth="3" /></Svg></button>
        <button type="button" aria-label="Personalizar línea de comando" className="ml-4">
          <Svg><path d="M2 22L14 10" stroke="#b9bbbd" strokeWidth="4" strokeLinecap="round" /><path d="M18 1c-6 1-7 6-5 10 4 3 9 1 10-5l-4 3-4-3z" fill="#b9bbbd" stroke="none" /></Svg>
        </button>
      </div>
      <label className="flex h-9 min-w-0 flex-1 items-center gap-1 rounded-[3px] bg-[#bcbdbf] pr-1 pl-[6px]">
        <Svg w={24} h={18}><path d="M1 1h22v16H1z" stroke="#55585c" strokeWidth="1.500" /><path d="M1 1h22v4H1z" fill="#55585c" stroke="none" /><path d="M2 8l4 2.500L2 13M8 13.500h5" stroke="#55585c" /></Svg>
        <Svg w={11} h={6}><path d="M0 0h11L5.500 6z" fill="#55585c" stroke="none" /></Svg>
        <input aria-label="Comando" placeholder="Escriba un comando" className="ml-[6px] min-w-0 flex-1 bg-transparent font-['DejaVu_Sans_Mono',monospace] text-[18px] text-[#333] italic placeholder:text-[#6a6c6f]" />
        <Svg w={12} h={6}><path d="M0 6h12L6 0z" fill="#55585c" stroke="none" /></Svg>
      </label>
    </div>
  )
}

function Viewport() {
  return (
    <main className="relative min-h-[600px] flex-1 overflow-hidden bg-[#212830]">
      <div className="flex items-start justify-between pt-[6px] pr-[17px] pl-[7px] text-[17px] leading-6 text-[#f0f0f0]">
        <p>[−][Isométrica SO][Sombreado con aristas]</p>
        <div className="flex h-7 items-center gap-4">
          <button type="button" aria-label="Minimizar ventana"><Svg w={16} h={16}><path d="M0 12h15" strokeWidth="4" stroke="#eee" /></Svg></button>
          <button type="button" aria-label="Restaurar ventana"><Svg w={16} h={16}><path d="M2 5.500h9v8H2z" strokeWidth="3" stroke="#eee" /><path d="M4 1.500h10.500V12" strokeWidth="1.500" stroke="#eee" /></Svg></button>
          <button type="button" aria-label="Cerrar ventana"><Svg w={14} h={16}><path d="M2 3l10 10M12 3L2 13" strokeWidth="3.500" stroke="#eee" /><path d="M0 2.500h5M9 2.500h5M0 13.500h5M9 13.500h5" strokeWidth="2" stroke="#eee" /></Svg></button>
        </div>
      </div>
      <Model />
      <svg width="104" height="92" viewBox="0 0 104 92" className="absolute top-[282px] left-[1407px]">
        <path d="M51.500 1v87" stroke="#7a6fe8" /><path d="M2 30l75 43" stroke="#7df07d" /><path d="M102 30L27 73" stroke="#f08080" />
        <rect x="47.500" y="54.500" width="8" height="8" fill="#212830" stroke="#fff" />
      </svg>
      <ViewCube />
      <NavBar />
      <CommandLine />
    </main>
  )
}

// --- Bottom bar ---
function LayoutTab({ label, active }: { label: string; active?: boolean }) {
  return (
    <button type="button" className={active ? "relative z-10 flex font-bold text-white" : "-ml-4 flex text-[#b4b7bb]"}>
      <svg width="18" height="26" viewBox="0 0 18 26"><path d="M0 0h18v26h-5C6 24 8 4 0 0z" fill={active ? "#3b4453" : "#303743"} /></svg>
      <span className={active ? "h-[26px] bg-[#3b4453] px-[6px]" : "h-[26px] bg-[#303743] px-[6px]"}>{label}</span>
      <svg width="18" height="26" viewBox="0 0 18 26"><path d="M18 0H0v26h5C12 24 10 4 18 0z" fill={active ? "#3b4453" : "#303743"} /></svg>
    </button>
  )
}

function StatusGroup({ className = "", children }: Kids & { className?: string }) {
  return <div className={`flex h-9 shrink-0 items-center bg-[#3b4453] ${className}`}>{children}</div>
}

function StatusButton({ label, on, className = "w-9", children }: Kids & { label: string; on?: boolean; className?: string }) {
  return (
    <button type="button" aria-label={label} className={`flex h-[34px] items-center justify-center ${className} ${on ? "bg-[#6190c1]" : ""}`}>
      {children}
    </button>
  )
}

const rocket = "M12 0c2 4 3 8 3 11l1 3 6 6v4l-7-3-3-3-3 3-7 3v-4l6-6 1-3c0-3 1-7 3-11z"

function StatusBar() {
  return (
    <footer className="flex h-[47px] items-start justify-between border-t-2 border-[#3f454e] pr-1 pl-[14px] text-[17px] leading-[26px]">
      <div className="flex whitespace-nowrap">
        <LayoutTab label="Modelo" active />
        <LayoutTab label="Presentación1" />
        <LayoutTab label="Presentación2" />
        <button type="button" aria-label="Nueva presentación">
          <Svg w={34} h={24}><path d="M0 22C2 8 6 1 14 0h18c0 12-5 22-14 23z" fill="#303743" stroke="none" /><path d="M17 5v12M11 11h12" stroke="#a9abad" strokeWidth="3" /></Svg>
        </button>
      </div>
      <div className="flex gap-[6px] pt-[2px]">
        <StatusGroup>
          <button type="button" className="w-[85px] text-center text-[17px] font-semibold text-[#f0f0f0]">MODELO</button>
        </StatusGroup>
        <StatusGroup>
          <StatusButton label="Rejilla"><Svg><path d="M6.500 0v24M12.500 0v24M18.500 0v24M0 5.500h24M0 11.500h24M0 17.500h24" strokeWidth="1.200" /></Svg></StatusButton>
          <StatusButton label="Forzcursor"><Svg><path d="M3 4.500h18M3 11.500h18M3 18.500h18" strokeWidth="3" strokeDasharray="3 4" /></Svg></StatusButton>
          <StatusButton label="Opciones de rejilla" className="w-6"><Caret big /></StatusButton>
        </StatusGroup>
        <StatusGroup>
          <StatusButton label="Orto"><Svg><path d="M.5 0v23.500H24M.5 16.500h7v7" /></Svg></StatusButton>
          <StatusButton label="Polar" on className="w-[34px]"><Svg><circle cx="10" cy="12" r="9" stroke="#fff" strokeWidth="1.200" /><path d="M9 12h15M11 12l9-10" stroke="#fff" strokeWidth="1.500" /></Svg></StatusButton>
          <StatusButton label="Opciones polar" className="w-[26px]"><Caret big /></StatusButton>
          <StatusButton label="Isométrico"><Svg><path d="M2 3l18 17" stroke="#c4606a" /><path d="M12 0v22" stroke="#53c878" strokeWidth="1.500" /><path d="M10.500 9.500h3v3h-3z" fill={P} /></Svg></StatusButton>
          <StatusButton label="Opciones isométrico" className="w-6"><Caret big /></StatusButton>
        </StatusGroup>
        <StatusGroup className="-ml-[4px] gap-[2px]">
          <StatusButton label="Rastreo" on className="w-[34px]"><Svg><path d="M1 20.500h23M1 20L19 3" stroke="#fff" strokeWidth="1.200" /><path d="M8 10h4v4H8z" fill="#fff" stroke="none" /></Svg></StatusButton>
          <StatusButton label="Referencia a objetos" on className="w-[34px]"><Svg><path d="M8 3.500h15.500v20h-20V9" stroke="#fff" strokeWidth="1.300" /><path d="M.5.500h6v6h-6z" stroke="#fff" strokeWidth="1.300" /></Svg></StatusButton>
          <StatusButton label="Opciones de referencia" className="w-6"><Caret big /></StatusButton>
        </StatusGroup>
        <StatusGroup className="pl-px">
          <StatusButton label="Anotaciones" on className="w-[34px]"><Svg><path d={rocket} transform="translate(-2 0)" fill="#fff" stroke="none" /><circle cx="19" cy="6" r="4" stroke="#fff" /></Svg></StatusButton>
          <StatusButton label="Escala automática"><Svg><path d={rocket} transform="translate(-2 0)" fill={W} stroke="none" /><path d="M22 0l-7 7h4l-3 5 8-7h-4z" fill={W} stroke="none" /></Svg></StatusButton>
          <StatusButton label="Anotativo"><Svg><path d={rocket} fill={W} stroke="none" /></Svg></StatusButton>
          <button type="button" className="flex w-[51px] items-center justify-center gap-[7px] pr-1 font-semibold text-white">1:1<Caret big /></button>
        </StatusGroup>
        <StatusGroup>
          <StatusButton label="Espacio de trabajo"><Svg><circle cx="12" cy="12" r="6.500" strokeWidth="5" /><circle cx="12" cy="12" r="10" strokeWidth="4" strokeDasharray="4 3.850" /></Svg></StatusButton>
          <StatusButton label="Opciones de espacio" className="w-6"><Caret big /></StatusButton>
        </StatusGroup>
        <StatusGroup className="-ml-[4px]">
          <StatusButton label="Supervisor"><Svg><path d="M12 0v24M0 12h24" strokeWidth="3" /></Svg></StatusButton>
        </StatusGroup>
        <StatusGroup>
          <StatusButton label="Aislar objetos"><Svg><path d="M.5.500h9v9h-9z" /><circle cx="18" cy="11" r="5.500" /><path d="M9.500 14.500l5.500 9H4z" /></Svg></StatusButton>
        </StatusGroup>
        <StatusGroup><span className="w-1" /></StatusGroup>
        <StatusGroup className="-ml-[2px]">
          <StatusButton label="Limpiar pantalla"><Svg><path d="M.5 4.500h23v16H.5z" /><path d="M22 6v6l-6-6zM2 19v-6l6 6z" fill={W} stroke="none" /><path d="M21 7l-5 4M3 18l5-4" strokeWidth="1.500" /></Svg></StatusButton>
          <StatusButton label="Personalización"><Svg><path d="M0 3.500h24M0 12h24M0 21h24" strokeWidth="3" /></Svg></StatusButton>
        </StatusGroup>
      </div>
    </footer>
  )
}

export default function App() {
  return (
    <div className="flex min-h-screen flex-col border border-[#0a8fd3] bg-[#222933] font-['Open_Sans','Noto_Sans',sans-serif]">
      <Header />
      <Ribbon />
      <FileTabs />
      <Viewport />
      <StatusBar />
    </div>
  )
}
